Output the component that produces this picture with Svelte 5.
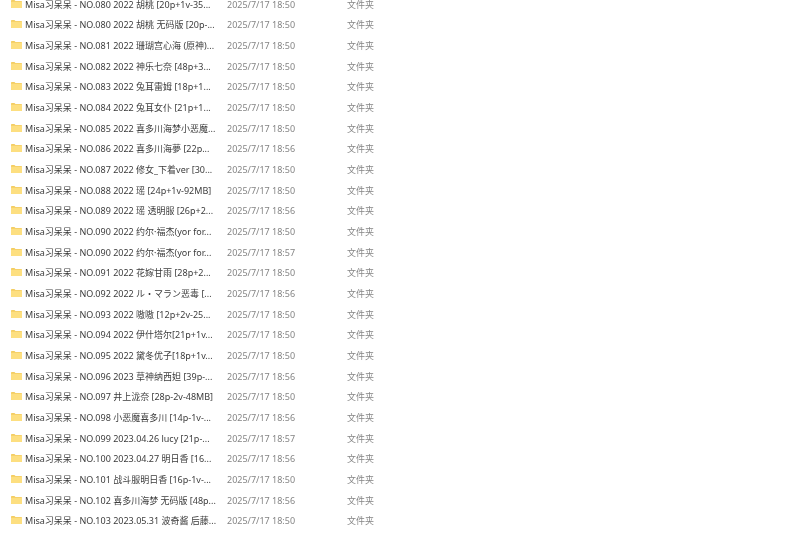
<script>
    const files = [
        ["Misa习呆呆 - NO.080 2022 胡桃 [20p+1v-35...", "18:50"],
        ["Misa习呆呆 - NO.080 2022 胡桃 无码版 [20p-...", "18:50"],
        ["Misa习呆呆 - NO.081 2022 珊瑚宫心海 (原神)...", "18:50"],
        ["Misa习呆呆 - NO.082 2022 神乐七奈 [48p+3...", "18:50"],
        ["Misa习呆呆 - NO.083 2022 兔耳雷姆 [18p+1...", "18:50"],
        ["Misa习呆呆 - NO.084 2022 兔耳女仆 [21p+1...", "18:50"],
        ["Misa习呆呆 - NO.085 2022 喜多川海梦小恶魔...", "18:50"],
        ["Misa习呆呆 - NO.086 2022 喜多川海夢 [22p...", "18:56"],
        ["Misa习呆呆 - NO.087 2022 修女_下着ver [30...", "18:50"],
        ["Misa习呆呆 - NO.088 2022 瑶 [24p+1v-92MB]", "18:50"],
        ["Misa习呆呆 - NO.089 2022 瑶 透明服 [26p+2...", "18:56"],
        ["Misa习呆呆 - NO.090 2022 约尔·福杰(yor for...", "18:50"],
        ["Misa习呆呆 - NO.090 2022 约尔·福杰(yor for...", "18:57"],
        ["Misa习呆呆 - NO.091 2022 花嫁甘雨 [28p+2...", "18:50"],
        ["Misa习呆呆 - NO.092 2022 ル・マラン恶毒 [...", "18:56"],
        ["Misa习呆呆 - NO.093 2022 嗷嗷 [12p+2v-25...", "18:50"],
        ["Misa习呆呆 - NO.094 2022 伊什塔尔[21p+1v...", "18:50"],
        ["Misa习呆呆 - NO.095 2022 黛冬优子[18p+1v...", "18:50"],
        ["Misa习呆呆 - NO.096 2023 草神纳西妲 [39p-...", "18:56"],
        ["Misa习呆呆 - NO.097 井上泷奈 [28p-2v-48MB]", "18:50"],
        ["Misa习呆呆 - NO.098 小恶魔喜多川 [14p-1v-...", "18:56"],
        ["Misa习呆呆 - NO.099 2023.04.26 lucy [21p-...", "18:57"],
        ["Misa习呆呆 - NO.100 2023.04.27 明日香 [16...", "18:56"],
        ["Misa习呆呆 - NO.101 战斗服明日香 [16p-1v-...", "18:50"],
        ["Misa习呆呆 - NO.102 喜多川海梦 无码版 [48p...", "18:56"],
        ["Misa习呆呆 - NO.103 2023.05.31 波奇酱 后藤...", "18:50"],
    ];
</script>

<div class="list">
    {#each files as [name, time]}
        <div class="row">
            <svg class="folder" width="11" height="8" viewBox="0 0 11 8">
                <path d="M0 .8C0 .3.3 0 .8 0h2.600l1.100 1h5.700c.5 0 .8.3.8.8v5.400c0 .5-.3.8-.8.8H.8C.3 8 0 7.700 0 7.200z" fill="#f3cd62" />
                <path d="M0 1.700h11v5.500c0 .5-.3.8-.8.8H.8C.3 8 0 7.700 0 7.200z" fill="#fddf80" />
            </svg>
            <span class="name">{name}</span>
            <span class="date">2025/7/17 {time}</span>
            <span class="type">文件夹</span>
        </div>
    {/each}
</div>

<style>
    :global(body) {
        background: #fff;
        overflow: hidden;
    }

    .list {
        margin-top: -6.3px;
        height: 543px;
        overflow: hidden;
        font-family: "Noto Sans", "Noto Sans CJK SC", sans-serif;
        font-size: 9px;
        filter: blur(0.25px);
    }

    .row {
        display: flex;
        align-items: center;
        height: 20.68px;
        padding-left: 11px;
        white-space: nowrap;
    }

    .folder {
        flex: none;
        margin-top: -1px;
    }

    .name {
        width: 202px;
        margin-left: 3px;
        color: #3c3c3c;
        overflow: hidden;
    }

    .date {
        width: 120px;
        color: #858585;
    }

    .type {
        color: #858585;
    }
</style>
